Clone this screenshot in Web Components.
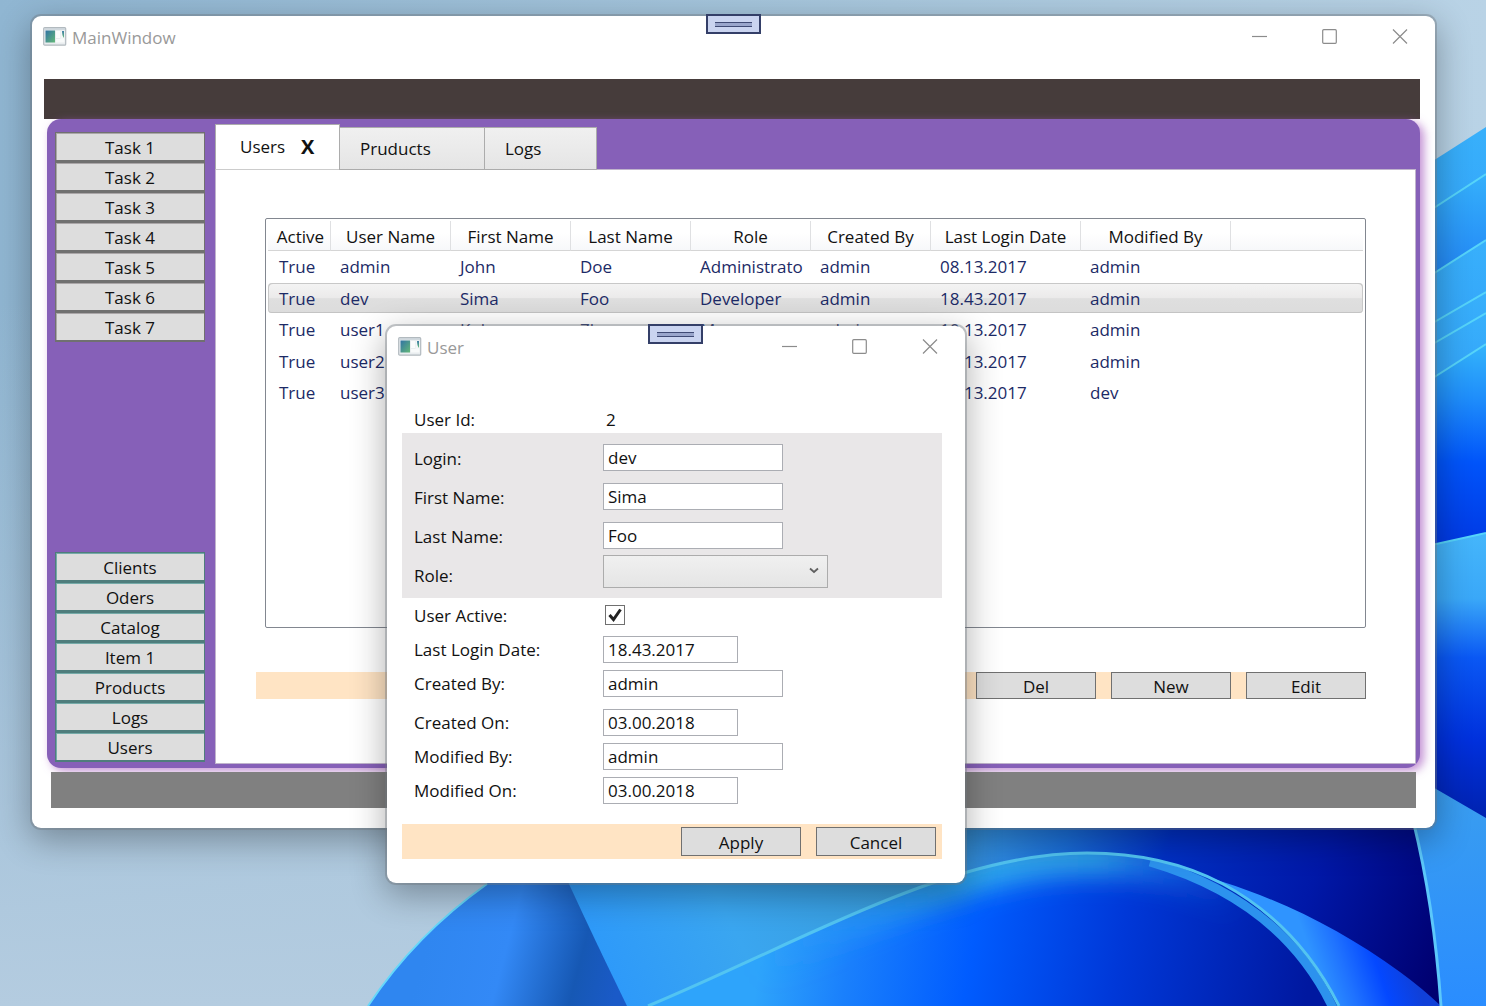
<!DOCTYPE html>
<html lang="en">
<head>
<meta charset="utf-8">
<title>MainWindow</title>
<style>
  html, body { margin: 0; height: 100%; overflow: hidden; }
  body { font: 17px/24px "Open Sans", "Noto Sans", sans-serif; color: #111; }
</style>
</head>
<body>
<desk-top>
  <app-window class="main" caption="MainWindow">
    <main-shell></main-shell>
  </app-window>
  <app-window class="dialog" caption="User">
    <user-form></user-form>
  </app-window>
</desk-top>

<script>
const define = (name, render) => customElements.define(name, class extends HTMLElement {
  connectedCallback() {
    if (this.shadowRoot) return;
    this.attachShadow({ mode: 'open' }).innerHTML =
      '<style>*{box-sizing:border-box}button,input,select{font:inherit;color:inherit;margin:0}</style>' + render(this);
  }
});

define('wall-paper', () => `
<style>:host{display:block} svg{display:block;width:100%;height:100%}</style>
<svg viewBox="0 0 1486 1006" preserveAspectRatio="none" aria-hidden="true">
  <defs>
    <linearGradient id="sky" x1="0" y1="0" x2="1" y2="0"><stop offset="0" stop-color="#90b6d2"/><stop offset=".6" stop-color="#a9c8de"/><stop offset="1" stop-color="#b9d3e6"/></linearGradient>
    <linearGradient id="skyLow" x1="0" y1="0" x2="0" y2="1"><stop offset=".3" stop-color="#b4cce0" stop-opacity="0"/><stop offset="1" stop-color="#b4cce0"/></linearGradient>
    <linearGradient id="petalA" gradientUnits="userSpaceOnUse" x1="430" y1="930" x2="620" y2="980"><stop offset="0" stop-color="#2f86f0"/><stop offset=".4" stop-color="#3389f6"/><stop offset=".78" stop-color="#1658b4"/><stop offset="1" stop-color="#1a5ac8"/></linearGradient>
    <linearGradient id="petalB" gradientUnits="userSpaceOnUse" x1="600" y1="1000" x2="900" y2="850"><stop offset="0" stop-color="#2c98fb"/><stop offset=".45" stop-color="#3aa6f0"/><stop offset="1" stop-color="#389ad8"/></linearGradient>
    <linearGradient id="night" gradientUnits="userSpaceOnUse" x1="960" y1="840" x2="1430" y2="1000"><stop offset="0" stop-color="#3a9ae4"/><stop offset=".2" stop-color="#1a6ed8"/><stop offset=".4" stop-color="#0030c4"/><stop offset=".7" stop-color="#0018a8"/><stop offset="1" stop-color="#000070"/></linearGradient>
    <linearGradient id="arch" gradientUnits="userSpaceOnUse" x1="760" y1="960" x2="1300" y2="1040"><stop offset="0" stop-color="#2ea4fb"/><stop offset=".16" stop-color="#1a80fc"/><stop offset=".38" stop-color="#005cff"/><stop offset=".65" stop-color="#0038d8"/><stop offset="1" stop-color="#0018a0"/></linearGradient>
    <linearGradient id="glow" gradientUnits="userSpaceOnUse" x1="760" y1="0" x2="1240" y2="0"><stop offset="0" stop-color="#2c9cf4" stop-opacity="0"/><stop offset=".4" stop-color="#30a8ee"/><stop offset=".7" stop-color="#2c9ce6"/><stop offset="1" stop-color="#1c70ec" stop-opacity="0"/></linearGradient>
    <linearGradient id="ribbon" gradientUnits="userSpaceOnUse" x1="1320" y1="980" x2="1405" y2="950"><stop offset="0" stop-color="#2f94ff"/><stop offset=".3" stop-color="#1f72ff"/><stop offset=".65" stop-color="#0448ff"/><stop offset="1" stop-color="#1040d8"/></linearGradient>
    <linearGradient id="edge" x1="0" y1="0" x2="0" y2="1"><stop offset="0" stop-color="#3b9fee"/><stop offset="1" stop-color="#2a8dff"/></linearGradient>
    <linearGradient id="b1" x1="0" y1="0" x2="0" y2="1"><stop offset="0" stop-color="#38b0fb"/><stop offset="1" stop-color="#2f98f8"/></linearGradient>
    <linearGradient id="b2" x1="0" y1="0" x2="0" y2="1"><stop offset="0" stop-color="#35b0fb"/><stop offset=".6" stop-color="#1a74f4"/></linearGradient>
    <linearGradient id="b3" x1="0" y1="0" x2="0" y2="1"><stop offset="0" stop-color="#34b4fb"/><stop offset=".25" stop-color="#1f8efb"/><stop offset=".55" stop-color="#0054fa"/><stop offset="1" stop-color="#0034e0"/></linearGradient>
    <linearGradient id="b4" x1="0" y1="0" x2="0" y2="1"><stop offset="0" stop-color="#45b6fb"/><stop offset=".22" stop-color="#3aa8f8"/><stop offset=".42" stop-color="#0a58f4"/><stop offset=".7" stop-color="#0030dc"/><stop offset="1" stop-color="#0020a8"/></linearGradient>
    <filter id="soft" x="-20%" y="-60%" width="140%" height="220%"><feGaussianBlur stdDeviation="12"/></filter>
    <clipPath id="inArch"><path d="M648 1006C735 970 820 925 905 893C965 870 1030 853 1087 853C1140 853 1185 864 1223 884C1280 915 1315 958 1339 1006Z"/></clipPath>
  </defs>
  <rect width="1486" height="1006" fill="url(#sky)"/><rect width="1486" height="1006" fill="url(#skyLow)"/>
  <path d="M1400 182L1486 127V400H1400Z" fill="url(#b1)"/>
  <path d="M1400 230L1486 174V420H1400Z" fill="url(#b2)"/>
  <path d="M1400 295L1486 240V450H1400Z" fill="url(#b1)"/>
  <path d="M1400 342L1486 292V450H1400Z" fill="url(#b1)"/>
  <path d="M1400 363L1486 313V450H1400Z" fill="url(#b1)"/>
  <path d="M1400 399L1486 344V560H1400Z" fill="url(#b3)"/>
  <path d="M1400 552L1486 533V830H1400Z" fill="url(#b4)"/>
  <path d="M1400 230L1486 174M1400 295L1486 240M1400 342L1486 292M1400 363L1486 313M1400 399L1486 344M1400 552L1486 533" stroke="#56d4fa" stroke-width="2" fill="none"/>
  <path d="M368 1006C400 958 442 916 487 884L520 800H600L640 1006Z" fill="url(#petalA)"/>
  <path d="M368 1006C400 958 442 916 487 884" fill="none" stroke="#66d8fa" stroke-width="2"/>
  <path d="M540 820Q580 910 627 1006H1100V820Z" fill="url(#petalB)"/>
  <path d="M930 800H1440V1006H930Z" fill="url(#night)"/>
  <path d="M1200 874L1223 882C1286 902 1345 932 1400 972Q1422 988 1441 1006H1320Z" fill="url(#ribbon)"/>
  <g clip-path="url(#inArch)">
    <path d="M640 1006H1350V840H640Z" fill="url(#arch)"/>
    <path d="M740 965Q850 912 905 893C965 870 1030 853 1087 853C1140 853 1185 864 1223 884L1260 908" fill="none" stroke="url(#glow)" stroke-width="46" filter="url(#soft)"/>
    <path d="M1150 862C1252 892 1306 950 1334 1010" fill="none" stroke="#2c92ee" stroke-width="9"/>
  </g>
  <path d="M648 1006C735 970 820 925 905 893C965 870 1030 853 1087 853C1140 853 1185 864 1223 884C1280 915 1315 958 1339 1006" fill="none" stroke="#52c4f2" stroke-width="3"/>
  <path d="M1413 820L1400 768L1486 818V1006H1441Q1434 905 1413 820Z" fill="url(#edge)"/>
  <path d="M1413 820Q1434 905 1441 1006" stroke="#5cc8fa" stroke-width="3" fill="none"/>
</svg>`);

define('desk-top', () => `
<style>
:host{display:block;position:relative;width:100%;height:100vh;overflow:hidden}
wall-paper{position:absolute;inset:0}
::slotted(.main){position:absolute;left:32px;right:51px;top:16px}
::slotted(.dialog){position:absolute;left:387px;top:326px;width:578px}
</style><wall-paper></wall-paper><slot></slot>`);

define('app-icon', () => `
<style>:host{display:block;width:24px;height:20px}svg{display:block}</style>
<svg width="24" height="20" viewBox="0 0 24 20" aria-hidden="true">
  <defs><linearGradient id="g" x1="0" y1="0" x2="1" y2="1"><stop offset="0" stop-color="#3173a4"/><stop offset="1" stop-color="#63b878"/></linearGradient>
  <linearGradient id="h" x1="0" y1="0" x2="0" y2="1"><stop offset="0" stop-color="#3f7fa8"/><stop offset="1" stop-color="#63b878"/></linearGradient></defs>
  <rect x=".7" y=".7" width="22" height="17.500" rx="1" fill="#e9edef" stroke="#b2babf" stroke-width="1.200"/>
  <path d="M1.500 2H22" stroke="#c9d2d8" stroke-width="1.500"/>
  <rect x="2.500" y="3.500" width="9.500" height="12" fill="url(#g)"/>
  <rect x="13" y="4" width="4" height="7" fill="#fbfcfc"/><rect x="13" y="12" width="8.500" height="3.500" fill="#f8fafa"/>
  <rect x="17.500" y="4" width="4" height="8" fill="#f4f7f7"/><path d="M19 4H21V11Q19 9 19 4Z" fill="url(#h)"/>
</svg>`);

define('app-window', el => `
<style>
:host{display:block;background:#fff;border-radius:9px;box-shadow:0 0 0 2px #70788066,0 10px 34px 2px #00000050}
header{display:flex;align-items:center;height:42px;padding-left:11px;color:#999}
app-icon{margin-right:5px}
h1{flex:1;margin:0;font-size:17px;font-weight:400;line-height:24px;padding-top:1px}
header button{display:grid;place-items:center;width:70px;height:42px;border:0;padding:0;background:none}
header svg{display:block;fill:none;stroke:#8c8c8c;stroke-width:1.200}
.grip{position:absolute;top:-2px;left:calc(50% - 28px);width:55px;height:20px;border:2px solid #343f68;background:#cad4f0;padding:0;display:grid;place-items:center}
.grip i{display:block;width:37px;height:5px;border:solid #3f4a74;border-width:1px 0;background:#9aa6cc}
</style>
<header><app-icon></app-icon><h1>${el.getAttribute('caption')}</h1>
<button type="button" aria-label="Minimize"><svg width="16" height="16"><path d="M0 7.500H15"/></svg></button>
<button type="button" aria-label="Maximize"><svg width="16" height="16"><rect x=".7" y=".7" width="13.600" height="13.600" rx="1"/></svg></button>
<button type="button" aria-label="Close"><svg width="16" height="16"><path d="M1 .500L15 14.500M15 .500L1 14.500"/></svg></button>
</header>
<button class="grip" type="button" aria-label="Debug toolbar"><i></i></button>
<slot></slot>`);

define('push-button', () => `
<style>:host{display:block;width:120px;height:27px}
button{display:flex;align-items:center;justify-content:center;width:100%;height:100%;padding:2px 0 0;border:1px solid #707070;background:#ddd;line-height:22px;color:#111}</style>
<button type="button"><slot></slot></button>`);

define('side-menu', el => `
<style>
:host{display:flex;flex-direction:column;--line:#707070;--trim:#aaa6a8}
:host([tone=teal]){--line:#4f7d7c;--trim:#74aaa8}
button{height:30px;padding:2px 0 0;border:1px solid var(--line);border-bottom-width:2px;background:#ddd;box-shadow:inset 1px 1px var(--trim);line-height:24px}
</style>${el.getAttribute('items').split(',').map(t => `<button type="button">${t}</button>`).join('')}`);

define('tab-strip', () => `
<style>
:host{display:flex;align-items:flex-end;height:46px;margin-bottom:-1px;position:relative}
button{border:0;padding:0;background:none;line-height:24px}
.tab{display:flex;align-items:center;height:43px;padding-left:20px;border:1px solid #acacac;background:linear-gradient(#f0f0f0,#e5e5e5)}
.tab+.tab{margin-left:-1px}
.active{height:46px;width:125px;padding-left:24px;gap:16px;background:#fff;border-bottom-color:#ccc}
.x{font-weight:700;font-size:20px}
.w1{width:146px}.w2{width:113px}
</style>
<div class="tab active"><button type="button" aria-pressed="true">Users</button><button class="x" type="button" aria-label="X">X</button></div>
<div class="tab w1"><button type="button">Pruducts</button></div>
<div class="tab w2"><button type="button">Logs</button></div>`);

const people = [
  ['True','admin','John','Doe','Administrato','admin','08.13.2017','admin'],
  ['True','dev','Sima','Foo','Developer','admin','18.43.2017','admin'],
  ['True','user1','Koby','Zhu','Manager','admin','10.13.2017','admin'],
  ['True','user2','','','','','10.13.2017','admin'],
  ['True','user3','','','','','10.13.2017','dev']
];
define('user-list', () => `
<style>
:host{display:block;min-height:410px;padding:2px;border:1px solid #828790;border-radius:2px;background:#fff}
table{width:100%;table-layout:fixed;border-collapse:separate;border-spacing:0}
th{height:30px;padding:2px 0 0;font-weight:400;color:#111;border-right:1px solid #dfe0e2;border-bottom:1px solid #d5d5d5;background:linear-gradient(#fff 40%,#f7f8fa)}
th:first-child{padding-left:3px}
th:last-child{border-right:0}
td{height:31px;padding:1px 0 0 9px;color:#1c2a66;overflow:hidden;white-space:nowrap}
tr:nth-child(even) td{height:32px}
td:first-child{padding-left:11px}
.sel td{border:solid transparent;border-width:1px 0;background:linear-gradient(#f4f4f4,#ebeaea 50%,#dfdfdf 52%,#dcdcdc) padding-box;box-shadow:inset 0 1px #c8c8c8,inset 0 -1px #c4c4c4}
.sel td:first-child{border-radius:4px 0 0 4px;box-shadow:inset 1px 1px #c8c8c8,inset 0 -1px #c4c4c4}
.sel td:last-child{border-radius:0 4px 4px 0;box-shadow:inset -1px 1px #c8c8c8,inset 0 -1px #c4c4c4}
</style>
<table>
<colgroup><col style="width:63px"><col style="width:120px"><col style="width:120px"><col style="width:120px"><col style="width:120px"><col style="width:120px"><col style="width:150px"><col style="width:150px"><col></colgroup>
<thead><tr>${['Active','User Name','First Name','Last Name','Role','Created By','Last Login Date','Modified By',''].map(h => `<th>${h}</th>`).join('')}</tr></thead>
<tbody>${people.map((r, i) => `<tr${i === 1 ? ' class="sel"' : ''}>${r.map(c => `<td>${c}</td>`).join('')}<td></td></tr>`).join('')}</tbody>
</table>`);

define('main-shell', () => `
<style>
:host{display:block;padding:21px 15px 20px 12px}
.banner{height:40px;background:#463c3b}
.frame{display:flex;gap:10px;margin-left:3px;padding:5px 4px 4px 8px;border-radius:14px;background:#8660b8;box-shadow:4px 3px 10px #a860c0b0}
nav{display:flex;flex-direction:column;justify-content:space-between;width:150px;padding:8px 0 2px}
.work{flex:1;min-width:0}
.page{padding:48px 49px 64px 40px;border:1px solid #c0b4cc;background:#fff}
user-list{margin-left:9px}
.bar{display:flex;justify-content:flex-end;gap:15px;margin-top:44px;background:#ffe4c4}
footer{height:36px;margin:4px 4px 0 7px;background:#808080}
</style>
<div class="banner"></div>
<div class="frame">
  <nav>
    <side-menu items="Task 1,Task 2,Task 3,Task 4,Task 5,Task 6,Task 7"></side-menu>
    <side-menu tone="teal" items="Clients,Oders,Catalog,Item 1,Products,Logs,Users"></side-menu>
  </nav>
  <section class="work">
    <tab-strip></tab-strip>
    <div class="page">
      <user-list></user-list>
      <div class="bar"><push-button>Del</push-button><push-button>New</push-button><push-button>Edit</push-button></div>
    </div>
  </section>
</div>
<footer></footer>`);

define('form-row', el => {
  const kind = el.getAttribute('kind') || 'text', value = el.getAttribute('value') || '';
  const control = {
    text: `<input id="c" type="text" value="${value}">`,
    date: `<input id="c" class="short" type="text" value="${value}">`,
    plain: `<output id="c">${value}</output>`,
    check: `<span class="stack"><input id="c" type="checkbox" checked><svg width="20" height="20" viewBox="0 0 20 20"><path d="M4.500 10L8.500 14.500L15.500 4.500"/></svg></span>`,
    select: `<span class="stack wide"><select id="c"><option></option></select><svg width="10" height="7" viewBox="0 0 10 7"><path d="M1 1.500L5 5L9 1.500"/></svg></span>`
  }[kind];
  return `
<style>
:host{display:grid;grid-template-columns:189px 1fr;align-items:center;height:34px;padding-left:12px}
:host([tall]){height:39px}
:host([kind=plain]){height:28px}
label{padding-top:2px}
output{padding:2px 0 0 3px}
input[type=text]{width:180px;height:27px;padding:0 4px;border:1px solid #abadb3;border-radius:0;background:#fff;color:#111}
input.short{width:135px}
.stack{display:grid;justify-self:start;align-items:center}
.stack>*{grid-area:1/1}
.stack svg{pointer-events:none;fill:none;stroke:#222;stroke-width:3}
:host([kind=check]) .stack{padding-left:2px}
input[type=checkbox]{appearance:none;width:20px;height:20px;border:1px solid #707070;background:#fff}
.wide{align-self:start}
.wide svg{justify-self:end;margin:0 9px 3px 0;stroke:#606060;stroke-width:1.800}
select{appearance:none;width:225px;height:33px;border:1px solid #acacac;border-radius:0;background:linear-gradient(#f0f0f0,#e5e5e5)}
</style><label for="c">${el.getAttribute('label')}</label>${control}`;
});

define('user-form', () => `
<style>
:host{display:block;padding:37px 23px 24px 15px}
.group{padding:5px 0 4px;background:#e9e7e8}
.later{margin-top:5px}
.bar{display:flex;justify-content:flex-end;gap:15px;margin-top:17px;padding:3px 6px;background:#ffe4c4}
push-button{height:29px}
</style>
<form-row kind="plain" label="User Id:" value="2"></form-row>
<div class="group">
<form-row tall label="Login:" value="dev"></form-row>
<form-row tall label="First Name:" value="Sima"></form-row>
<form-row tall label="Last Name:" value="Foo"></form-row>
<form-row tall kind="select" label="Role:"></form-row>
</div>
<form-row kind="check" label="User Active:"></form-row>
<form-row kind="date" label="Last Login Date:" value="18.43.2017"></form-row>
<form-row label="Created By:" value="admin"></form-row>
<div class="later">
<form-row kind="date" label="Created On:" value="03.00.2018"></form-row>
<form-row label="Modified By:" value="admin"></form-row>
<form-row kind="date" label="Modified On:" value="03.00.2018"></form-row>
</div>
<div class="bar"><push-button>Apply</push-button><push-button>Cancel</push-button></div>`);
</script>
</body>
</html>
